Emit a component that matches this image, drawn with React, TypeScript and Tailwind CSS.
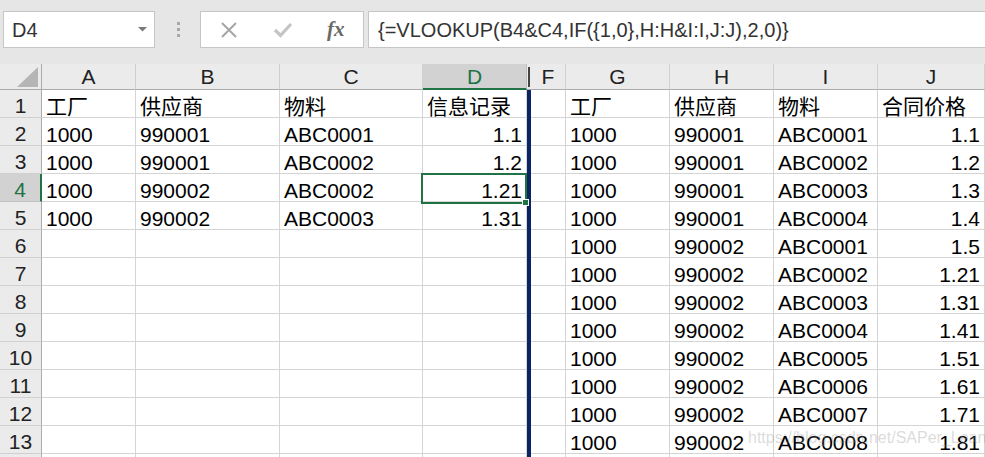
import React from "react";

type Col = { k: string; w: string; bar?: boolean; sel?: boolean };

const COLS: Col[] = [
  { k: "A", w: "w-[94px]" },
  { k: "B", w: "w-[144px]" },
  { k: "C", w: "w-[143px]" },
  { k: "D", w: "w-[104px]", sel: true },
  { k: "E", w: "w-[4px]", bar: true },
  { k: "F", w: "w-[35px]" },
  { k: "G", w: "w-[104px]" },
  { k: "H", w: "w-[104px]" },
  { k: "I", w: "w-[104px]" },
  { k: "J", w: "w-[107px]" },
];

const NUMERIC = new Set(["D", "J"]);

const LEFT: string[][] = [
  ["工厂", "供应商", "物料", "信息记录"],
  ["1000", "990001", "ABC0001", "1.1"],
  ["1000", "990001", "ABC0002", "1.2"],
  ["1000", "990002", "ABC0002", "1.21"],
  ["1000", "990002", "ABC0003", "1.31"],
];

const RIGHT: string[][] = [
  ["工厂", "供应商", "物料", "合同价格"],
  ["1000", "990001", "ABC0001", "1.1"],
  ["1000", "990001", "ABC0002", "1.2"],
  ["1000", "990001", "ABC0003", "1.3"],
  ["1000", "990001", "ABC0004", "1.4"],
  ["1000", "990002", "ABC0001", "1.5"],
  ["1000", "990002", "ABC0002", "1.21"],
  ["1000", "990002", "ABC0003", "1.31"],
  ["1000", "990002", "ABC0004", "1.41"],
  ["1000", "990002", "ABC0005", "1.51"],
  ["1000", "990002", "ABC0006", "1.61"],
  ["1000", "990002", "ABC0007", "1.71"],
  ["1000", "990002", "ABC0008", "1.81"],
];

function cellValue(row: number, col: string): string {
  const li = ["A", "B", "C", "D"].indexOf(col);
  if (li >= 0) return LEFT[row - 1]?.[li] ?? "";
  const ri = ["G", "H", "I", "J"].indexOf(col);
  if (ri >= 0) return RIGHT[row - 1]?.[ri] ?? "";
  return "";
}

function TopBar() {
  return (
    <div className="h-[64px] bg-[#e6e6e6] flex items-start pt-[11px] pl-[3px]">
      <div className="w-[152px] h-[37px] bg-white border border-[#c6c6c6] flex items-center justify-between pl-[8px] pr-[7px]">
        <span className="text-[20px] leading-[20px] text-[#333]">D4</span>
        <svg width="9" height="5" viewBox="0 0 9 5">
          <path d="M0 0 L9 0 L4.5 4.5 Z" fill="#7a7a7a" />
        </svg>
      </div>
      <div className="w-[45px] h-[37px] flex flex-col items-center justify-center gap-[3px] pl-[2px]">
        <div className="w-[3px] h-[3px] bg-[#a8a8a8]" />
        <div className="w-[3px] h-[3px] bg-[#a8a8a8]" />
        <div className="w-[3px] h-[3px] bg-[#a8a8a8]" />
      </div>
      <div className="w-[164px] h-[37px] bg-white border border-[#c6c6c6] flex items-center pl-[20px]">
        <svg width="16" height="16" viewBox="0 0 16 16">
          <path d="M1 1 L15 15 M15 1 L1 15" stroke="#a6a6a6" strokeWidth="2" fill="none" />
        </svg>
        <svg className="ml-[36px]" width="20" height="16" viewBox="0 0 20 16">
          <path d="M2 8 L7.5 13.5 L18 2" stroke="#c4c4c4" strokeWidth="3.2" fill="none" />
        </svg>
        <span className="ml-[34px] font-['Liberation_Serif',serif] italic font-bold text-[21px] leading-[21px] text-[#6a6a6a]">
          fx
        </span>
      </div>
      <div className="ml-[4px] flex-1 h-[37px] bg-white border-l border-t border-b border-[#c6c6c6] flex items-center pl-[9px]">
        <span className="text-[20px] leading-[20px] text-[#333] whitespace-nowrap">
          {"{=VLOOKUP(B4&C4,IF({1,0},H:H&I:I,J:J),2,0)}"}
        </span>
      </div>
    </div>
  );
}

function HeaderRow() {
  return (
    <div className="flex h-[26px]">
      <div className="w-[42px] shrink-0 h-full bg-[#ebebeb] border-r border-b border-[#ababab] relative">
        <svg className="absolute left-[17px] top-[3px]" width="21" height="20" viewBox="0 0 21 20">
          <path d="M21 0 L21 20 L0 20 Z" fill="#b5b5b5" />
        </svg>
      </div>
      {COLS.map((c) => {
        if (c.bar) {
          return (
            <div key={c.k} className={`${c.w} shrink-0 h-full bg-[#ebebeb] border-b border-[#ababab] flex justify-center items-center`}>
              <div className="w-[2px] h-[20px] bg-[#444]" />
            </div>
          );
        }
        if (c.sel) {
          return (
            <div key={c.k} className={`${c.w} shrink-0 h-full bg-[#d2d2d2] border-r border-r-[#c0c0c0] border-b-2 border-b-[#217346] text-center text-[21px] leading-[20px] pt-[3px] text-[#217346]`}>
              {c.k}
            </div>
          );
        }
        return (
          <div key={c.k} className={`${c.w} shrink-0 h-full bg-[#ebebeb] border-r border-r-[#d0d0d0] border-b border-b-[#ababab] text-center text-[21px] leading-[20px] pt-[3px] text-[#222]`}>
            {c.k}
          </div>
        );
      })}
    </div>
  );
}

function Row({ n }: { n: number }) {
  const selRow = n === 4;
  return (
    <div className="flex h-[28px] shrink-0">
      {selRow ? (
        <div className="w-[42px] shrink-0 h-full bg-[#d2d2d2] border-r-2 border-r-[#217346] border-b border-b-[#c0c0c0] text-center text-[21px] leading-[21px] pt-[5px] text-[#217346]">
          {n}
        </div>
      ) : (
        <div className="w-[42px] shrink-0 h-full bg-[#ebebeb] border-r border-r-[#ababab] border-b border-b-[#d0d0d0] text-center text-[21px] leading-[21px] pt-[5px] text-[#222]">
          {n}
        </div>
      )}
      {COLS.map((c) => {
        if (c.bar) {
          return <div key={c.k} className={`${c.w} shrink-0 h-full bg-[#0b2563]`} />;
        }
        const v = cellValue(n, c.k);
        const right = NUMERIC.has(c.k) && n > 1;
        const isSel = selRow && c.sel;
        return (
          <div
            key={c.k}
            className={`${c.w} shrink-0 h-full border-r border-b border-[#d4d4d4] text-[21px] leading-[21px] pt-[6px] px-[4px] whitespace-nowrap text-black ${right ? "text-right" : "text-left"} ${isSel ? "relative" : ""}`}
          >
            {v}
            {isSel && (
              <>
                <div className="absolute -left-[2px] -top-[1px] w-[106px] h-[31px] border-2 border-[#217346] z-10" />
                <div className="absolute left-[99px] top-[25px] w-[7px] h-[7px] bg-[#217346] border border-white z-20" />
              </>
            )}
          </div>
        );
      })}
    </div>
  );
}

export default function App() {
  const rows = Array.from({ length: 14 }, (_, i) => i + 1);
  return (
    <div className="w-[985px] h-[457px] overflow-hidden bg-white relative font-['Liberation_Sans','Noto_Sans_CJK_SC',sans-serif]">
      <TopBar />
      <HeaderRow />
      {rows.map((n) => (
        <Row key={n} n={n} />
      ))}
      <div className="absolute left-[748px] top-[428px] text-[16px] leading-[20px] text-[rgba(150,150,150,0.35)] whitespace-nowrap pointer-events-none">
        https://blog.csdn.net/SAPer_Lean
      </div>
    </div>
  );
}
